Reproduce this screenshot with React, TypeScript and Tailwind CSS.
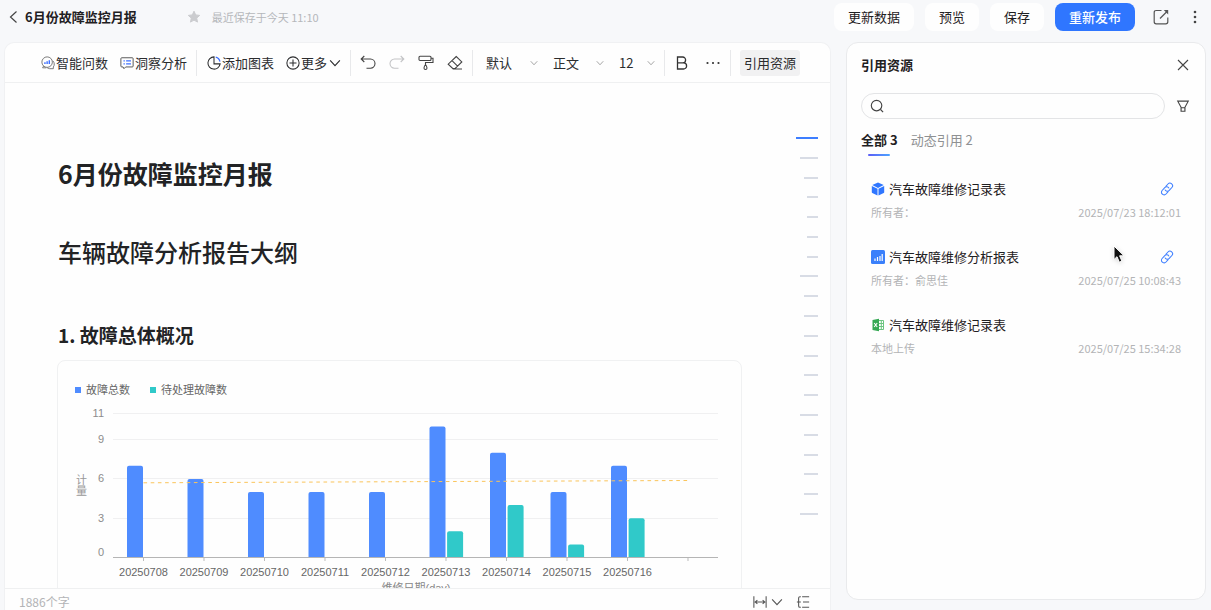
import { useState } from 'react'
import type { ReactNode } from 'react'
import clsx from 'clsx'

type Resource = {
  id: string
  name: string
  meta: string
  time: string
  kind: 'dataset' | 'report' | 'excel'
  linked: boolean
}

const resources: Resource[] = [
  { id: 'r1', name: '汽车故障维修记录表', meta: '所有者：', time: '2025/07/23 18:12:01', kind: 'dataset', linked: true },
  { id: 'r2', name: '汽车故障维修分析报表', meta: '所有者：俞思佳', time: '2025/07/25 10:08:43', kind: 'report', linked: true },
  { id: 'r3', name: '汽车故障维修记录表', meta: '本地上传', time: '2025/07/25 15:34:28', kind: 'excel', linked: false },
]

const faults = [
  { day: '20250708', total: 7, pending: 0 },
  { day: '20250709', total: 6, pending: 0 },
  { day: '20250710', total: 5, pending: 0 },
  { day: '20250711', total: 5, pending: 0 },
  { day: '20250712', total: 5, pending: 0 },
  { day: '20250713', total: 10, pending: 2 },
  { day: '20250714', total: 8, pending: 4 },
  { day: '20250715', total: 5, pending: 1 },
  { day: '20250716', total: 7, pending: 3 },
]

// heading depth of every outline mark, 0 is the current one
const outline = [0, 1, 2, 3, 3, 3, 3, 1, 2, 2, 2, 2, 2, 2, 1, 2, 2, 2, 2, 1]
const outlineStyles = ['w-[22px] bg-[#3d7eff]', 'w-[18px] bg-[#d8dce5]', 'w-[14px] bg-[#d8dce5]', 'w-[11px] bg-[#d8dce5]']

function Icon({ size = 16, className, children }: { size?: number; className?: string; children: ReactNode }) {
  return (
    <svg
      width={size}
      height={size}
      viewBox="0 0 16 16"
      fill="none"
      stroke="currentColor"
      strokeWidth={1.1}
      className={clsx('shrink-0', className)}
      aria-hidden="true"
    >
      {children}
    </svg>
  )
}

function Chevron({ size = 12, className }: { size?: number; className?: string }) {
  return (
    <Icon size={size} className={className}>
      <path d="M1.5 4.5 8 11.5l6.5-7" strokeWidth={1.5} />
    </Icon>
  )
}

function Divider() {
  return <div className="mx-[9px] h-[26px] w-px shrink-0 bg-[#e8e9eb]" />
}

function ToolButton({ label, children }: { label: string; children: ReactNode }) {
  return (
    <button type="button" aria-label={label} className="flex w-4 shrink-0 items-center justify-center">
      {children}
    </button>
  )
}

function ToolSelect({ label, options, className }: { label: string; options: string[]; className: string }) {
  return (
    <div className={clsx('relative shrink-0', className)}>
      <select aria-label={label} className="w-full appearance-none bg-transparent leading-5 outline-none">
        {options.map((o) => (
          <option key={o}>{o}</option>
        ))}
      </select>
      <Chevron size={8} className="pointer-events-none absolute top-1.5 right-0 text-[#888]" />
    </div>
  )
}

function Header() {
  return (
    <header className="mb-2 flex h-[34px] shrink-0 items-center px-2">
      <button type="button" aria-label="返回" className="flex w-[17px] items-center">
        <svg width="11" height="14" viewBox="0 0 11 14" fill="none" stroke="#444" strokeWidth="1.2">
          <path d="M8.5 1.5 2.500 7l6 5.500" />
        </svg>
      </button>
      <h1 className="text-[13px] leading-5 font-bold text-[#1f2022]">6月份故障监控月报</h1>
      <button type="button" aria-label="收藏" className="ml-[50px]">
        <svg width="14" height="14" viewBox="0 0 14 14" fill="#cbcccf" stroke="#cbcccf" strokeLinejoin="round">
          <path d="m7 1.200 1.700 3.700 4 .5-3 2.700.8 4L7 10.100l-3.500 2 .8-4-3-2.700 4-.5z" />
        </svg>
      </button>
      <span className="ml-[11px] text-[11px] leading-5 text-[#b5b7ba]">最近保存于今天 11:10</span>

      <div className="ml-auto flex items-center gap-[11px] text-[13px]">
        <button type="button" className="h-7 rounded-lg bg-[#fefefe] px-3.5">更新数据</button>
        <button type="button" className="h-7 rounded-lg bg-[#fefefe] px-3.5">预览</button>
        <button type="button" className="h-7 rounded-lg bg-[#fefefe] px-3.5">保存</button>
        <button type="button" className="h-7 rounded-lg bg-[#2f76ff] px-3.5 font-medium text-white">重新发布</button>
      </div>
      <button type="button" aria-label="分享" className="ml-[18px] text-[#555]">
        <Icon>
          <path d="M8.500 1.500H3.200q-2 0-2 2v9.300q0 2 2 2h9.600q2 0 2-2V8.500" strokeWidth={1.200} />
          <path d="M7 9.500 14 2.500" strokeWidth={1.200} />
          <path d="M10.800 1h4.400v4.400z" fill="currentColor" stroke="none" />
        </Icon>
      </button>
      <button type="button" aria-label="更多操作" className="ml-[18px] text-[#444]">
        <Icon>
          <g fill="currentColor" stroke="none">
            <circle cx="8" cy="3" r="1.3" />
            <circle cx="8" cy="8" r="1.3" />
            <circle cx="8" cy="13" r="1.3" />
          </g>
        </Icon>
      </button>
    </header>
  )
}

function Toolbar() {
  return (
    <div className="flex h-10 shrink-0 items-center border-b border-[#eff0f1] pl-9 text-[13px] leading-5 whitespace-nowrap text-[#2b2c2e]">
      <div className="flex items-center gap-3">
        <button type="button" className="flex items-center gap-px">
          <Icon size={14}>
            <circle cx="7" cy="7" r="6" stroke="#777" />
            <path d="M3 11.500 1.800 13.500H6" stroke="#777" />
            <path d="M13.500 5.500c2 2 2.200 5 .6 7v2H10c-1.200 0-2.300-.4-3-1.200" stroke="#777" />
            <path d="M4.500 9V7.200M7 9V6M9.500 9V4.800" stroke="#3d6fff" strokeWidth={1.6} />
          </Icon>
          智能问数
        </button>
        <button type="button" className="flex items-center gap-px">
          <Icon size={14}>
            <path d="M2 2h12q1 0 1 1v8.500q0 1-1 1H6.500L4.500 14.500l-1-2H2q-1 0-1-1V3q0-1 1-1z" stroke="#555" strokeLinejoin="round" />
            <path d="M4 5.500h1.500M7 5.500h5.500M4 9h1.500M7 9h5.500" stroke="#3d6fff" strokeWidth={1.400} />
          </Icon>
          洞察分析
        </button>
      </div>
      <Divider />
      <div className="flex items-center gap-3 pl-px">
        <button type="button" className="flex items-center gap-px">
          <Icon size={14}>
            <path d="M8 1a7 7 0 1 0 7 8H8z" strokeWidth={1.200} />
            <path d="M10 1.200a6.500 6.500 0 0 1 4.800 5.300" stroke="#3d6fff" strokeWidth={1.400} />
          </Icon>
          添加图表
        </button>
        <button type="button" className="flex items-center gap-px">
          <Icon size={14}>
            <circle cx="8" cy="8" r="7" strokeWidth={1.200} />
            <path d="M8 4v8M4 8h8" strokeWidth={1.200} />
          </Icon>
          更多
          <Chevron className="ml-px" />
        </button>
      </div>
      <Divider />
      <div className="flex items-center gap-[13px] text-[#444]">
        <ToolButton label="撤销">
          <Icon>
            <path d="M4.300 1 1.200 4l3.100 3M1.400 4h9a4.600 4.600 0 0 1 0 9.200H6.500" />
          </Icon>
        </ToolButton>
        <ToolButton label="重做">
          <Icon className="text-[#c3c4c6]">
            <path d="m11.700 1 3.100 3-3.100 3M14.600 4h-9a4.600 4.600 0 0 0 0 9.200h3.900" />
          </Icon>
        </ToolButton>
        <ToolButton label="格式刷">
          <Icon>
            <rect x="1" y="1.200" width="12" height="4.300" rx="1" />
            <path d="M13 3.200h2v4.300H7.500v2" />
            <path d="M7.500 9.500c1 1.300 1.500 2.200 1.500 3.500a1.500 1.500 0 0 1-3 0c0-1.300.5-2.200 1.500-3.500z" />
          </Icon>
        </ToolButton>
        <ToolButton label="清除格式">
          <Icon>
            <path d="M9.300 1.500 1.200 9.200l4.500 4.300h2.500l6.600-6.600zM5 5.600l5.600 5.600M5.700 14H15" />
          </Icon>
        </ToolButton>
      </div>
      <Divider />
      <div className="flex items-center gap-[15px] pl-1">
        <ToolSelect label="字体" options={['默认', '宋体', '黑体']} className="w-[52px]" />
        <ToolSelect label="段落样式" options={['正文', '标题 1', '标题 2']} className="w-[51px]" />
        <ToolSelect label="字号" options={['12', '14', '16']} className="w-9" />
      </div>
      <Divider />
      <div className="flex items-center gap-[15px] text-[#333]">
        <ToolButton label="加粗">
          <Icon>
            <path d="M3.500 2h5.200a2.900 2.900 0 0 1 0 5.800H3.500zM3.500 7.800h6a3.100 3.100 0 0 1 0 6.200h-6z" strokeWidth={1.300} />
          </Icon>
        </ToolButton>
        <ToolButton label="更多格式">
          <Icon>
            <g fill="currentColor" stroke="none">
              <circle cx="2.500" cy="8" r="1.100" />
              <circle cx="8" cy="8" r="1.100" />
              <circle cx="13.500" cy="8" r="1.100" />
            </g>
          </Icon>
        </ToolButton>
      </div>
      <Divider />
      <button type="button" className="h-[26px] rounded-[3px] bg-[#f1f1f2] px-1">引用资源</button>
    </div>
  )
}

const STEP = 60.5
const UNIT = 13.1
const BASE = 196.5

function topRounded(x: number, value: number) {
  const y = BASE - value * UNIT
  return `M${x} ${BASE}V${y + 2}q0-2 2-2h12q2 0 2 2V${BASE}z`
}

function FaultChart() {
  const ticks = [
    { value: 11, line: 52.5, label: 56 },
    { value: 9, line: 78.5, label: 82 },
    { value: 6, line: 117.5, label: 121 },
    { value: 3, line: 157.5, label: 161 },
    { value: 0, line: 0, label: 195 },
  ]
  return (
    <svg
      viewBox="0 0 683 250"
      className="w-full font-['Liberation_Sans','Noto_Sans_CJK_SC',sans-serif] text-[11px]"
      role="img"
      aria-label="故障总数与待处理故障数"
    >
      <rect x="17" y="26" width="6" height="6" fill="#4f8cff" />
      <text x="28" y="33" fill="#666">故障总数</text>
      <rect x="92" y="26" width="6" height="6" fill="#30c9c9" />
      <text x="103" y="33" fill="#666">待处理故障数</text>

      {ticks.map((t) => (
        <g key={t.value}>
          {t.line > 0 && <path d={`M55 ${t.line}H660`} stroke="#f0f0f1" />}
          <text x="46" y={t.label} textAnchor="end" fill="#8c8c8c">{t.value}</text>
        </g>
      ))}
      <text x="18" y="123" fill="#999">计</text>
      <text x="18" y="134" fill="#999">量</text>

      {faults.map((f, i) => (
        <g key={f.day}>
          <path d={topRounded(69 + i * STEP, f.total)} fill="#4f8cff" />
          {f.pending > 0 && <path d={topRounded(86.6 + i * STEP, f.pending)} fill="#30c9c9" />}
          <text x={85.5 + i * STEP} y="215" textAnchor="middle" fill="#666">{f.day}</text>
        </g>
      ))}
      <path d="M55 196.5H660" stroke="#b5b5b5" />
      {Array.from({ length: 10 }, (_, i) => (
        <path key={i} d={`M${85.5 + i * STEP} 197v3`} stroke="#bbb" />
      ))}
      <path d="M85.5 121.8 630 119.5" stroke="#fbc55b" strokeDasharray="3.6 3.6" fill="none" />
      <text x="358" y="231" textAnchor="middle" fill="#888">维修日期(day)</text>
    </svg>
  )
}

function Editor() {
  return (
    <main className="flex min-w-0 flex-1 flex-col overflow-hidden rounded-t-[10px] border border-b-0 border-[#f0f1f3] bg-[#fefefe]">
      <Toolbar />
      <div className="flex min-h-0 flex-1 overflow-hidden">
        <article className="min-w-0 flex-1 pt-[72px] pl-[52px] text-[#222325]">
          <h2 className="pl-px text-[25px] leading-9 font-bold">6月份故障监控月报</h2>
          <h2 className="mt-[43px] pl-px text-[24px] leading-9 font-medium">车辆故障分析报告大纲</h2>
          <h3 className="mt-[51px] pl-px text-[19px] leading-7 font-bold">1. 故障总体概况</h3>
          <div className="mt-[11px] rounded-lg border border-[#f0f1f2]">
            <FaultChart />
          </div>
        </article>
        <nav aria-label="大纲" className="mt-[54px] mr-3 ml-[53px] flex h-[378px] w-[23px] flex-col items-end justify-between">
          {outline.map((level, i) => (
            <a key={i} href={`#section-${i + 1}`} aria-label={`第 ${i + 1} 节`} className={clsx('block h-0.5', outlineStyles[level])} />
          ))}
        </nav>
      </div>
      <footer className="flex h-[22px] shrink-0 items-center border-t border-[#eff0f1] pt-1 pr-5 pl-3.5 text-[12px] leading-4 text-[#b3b4b6]">
        <span>1886个字</span>
        <div className="ml-auto flex items-center text-[#555]">
          <button type="button" aria-label="页面宽度" className="flex items-center gap-1">
            <Icon size={14}>
              <path d="M1 1.500v13M15 1.500v13M2.500 8h11M5 5.800 2.500 8 5 10.200M11 5.800 13.500 8 11 10.200" strokeWidth={1.200} />
            </Icon>
            <Chevron />
          </button>
          <button type="button" aria-label="目录" className="ml-[13px]">
            <Icon size={14}>
              <path d="M7 2h8M1 8h4.500M8 8h7M7 14h8M5.500 2h-1q-1.500 0-1.500 1.500v9Q3 14 4.500 14h1" strokeWidth={1.200} />
            </Icon>
          </button>
        </div>
      </footer>
    </main>
  )
}

function ResourceIcon({ kind }: { kind: Resource['kind'] }) {
  if (kind === 'dataset') {
    return (
      <svg width="14" height="14" viewBox="0 0 14 14" aria-hidden="true">
        <path d="M7 .5 12.7 3 7 5.900 1.300 3z" fill="#2f76ff" />
        <path d="M.8 4 6.500 6.800v6.700L1.300 11a1 1 0 0 1-.5-.8z" fill="#2f76ff" />
        <path d="M13.200 4 7.500 6.800v6.700l5.200-2.500a1 1 0 0 0 .5-.8z" fill="#2f76ff" />
      </svg>
    )
  }
  if (kind === 'report') {
    return (
      <svg width="14" height="14" viewBox="0 0 14 14" aria-hidden="true">
        <rect width="14" height="14" rx="1.5" fill="#3a80fb" />
        <path d="M4 11V8.500M6.500 11V7M9 11V6M11.200 11V4" stroke="#fff" strokeWidth="1.2" />
      </svg>
    )
  }
  return (
    <svg width="14" height="14" viewBox="0 0 14 14" aria-hidden="true">
      <path d="M8 2.500h4.500v9H8M8 5.500h4.500M8 8.500h4.500M10.300 2.500v9" fill="none" stroke="#6cc580" />
      <path d="M1.500 2 8 .8v12.400L1.500 12z" fill="#35a853" />
      <path d="m3.200 5 3 4M6.200 5l-3 4" stroke="#fff" strokeWidth="1.1" />
    </svg>
  )
}

function ResourcePanel() {
  const [tab, setTab] = useState<'all' | 'dynamic'>('all')
  const tabs = [
    { id: 'all' as const, label: '全部 3' },
    { id: 'dynamic' as const, label: '动态引用 2' },
  ]
  const shown = tab === 'all' ? resources : resources.filter((r) => r.linked)

  return (
    <aside className="mb-[10px] w-[360px] shrink-0 rounded-xl border border-[#e9eaec] bg-[#fefefe] px-3.5 pt-3">
      <div className="flex items-center justify-between">
        <h2 className="text-[13px] leading-5 font-bold">引用资源</h2>
        <button type="button" aria-label="关闭" className="text-[#444]">
          <Icon>
            <path d="m3 3 10 10M13 3 3 13" />
          </Icon>
        </button>
      </div>

      <div className="mt-[18px] flex items-center gap-[10px]">
        <label className="flex h-[26px] min-w-0 flex-1 items-center rounded-full border border-[#e3e4e6] px-2">
          <Icon size={14} className="text-[#444]">
            <circle cx="7.5" cy="7.5" r="6" strokeWidth={1.3} />
            <path d="m12 12 3 3" strokeWidth={1.3} />
          </Icon>
          <input type="text" aria-label="搜索资源" className="ml-2 min-w-0 flex-1 bg-transparent text-[13px] outline-none" />
        </label>
        <button type="button" aria-label="筛选" className="flex w-4 justify-center text-[#444]">
          <Icon size={14}>
            <path d="M2 2.500h12L10.200 9.500v4.500H5.800V9.500zM5.800 10h4.400" strokeWidth={1.3} />
          </Icon>
        </button>
      </div>

      <div role="tablist" className="mt-[11px] flex gap-[13px] text-[13px] leading-5">
        {tabs.map((t) => (
          <button
            key={t.id}
            type="button"
            role="tab"
            aria-selected={tab === t.id}
            onClick={() => setTab(t.id)}
            className={clsx('flex flex-col items-center gap-1', tab === t.id ? 'font-bold text-[#1f2022]' : 'text-[#8f9193]')}
          >
            {t.label}
            <span className={clsx('h-0.5 w-[22px] rounded-full', tab === t.id && 'bg-linear-to-r from-[#5b5cf6] to-[#4aa3ff]')} />
          </button>
        ))}
      </div>

      <ul className="mt-[23px] flex flex-col gap-[27px] px-[10px]">
        {shown.map((r) => (
          <li key={r.id} className="relative">
            <div className="flex items-center gap-1">
              <ResourceIcon kind={r.kind} />
              <span className="text-[13px] leading-5">{r.name}</span>
              {r.linked && (
                <button type="button" aria-label="动态引用" className="mr-[7px] ml-auto text-[#3d7eff]">
                  <Icon size={14}>
                    <g transform="rotate(-48 8 8)" strokeWidth={1.2}>
                      <path d="M7 11H3a3 3 0 0 1 0-6h4.500a3 3 0 0 1 2.600 4.300" />
                      <path d="M9 5h4a3 3 0 0 1 0 6H8.500a3 3 0 0 1-2.600-4.300" />
                    </g>
                  </Icon>
                </button>
              )}
            </div>
            <div className="mt-[5px] flex justify-between text-[11px] leading-4 text-[#b3b4b6]">
              <span>{r.meta}</span>
              <time>{r.time}</time>
            </div>
            {r.kind === 'report' && (
              <svg width="12" height="19" viewBox="0 0 12 19" className="pointer-events-none absolute -top-0.5 right-14 drop-shadow-sm" aria-hidden="true">
                <path d="M1 1v13.500l3-2.800 2.300 5.500 2.600-1.100-2.300-5.300H11z" fill="#111" stroke="#fff" />
              </svg>
            )}
          </li>
        ))}
      </ul>
    </aside>
  )
}

export default function App() {
  return (
    <div className="flex h-screen flex-col overflow-hidden bg-[#f7f8fa] font-['Noto_Sans_CJK_SC','Liberation_Sans',sans-serif] text-[#1f2022]">
      <Header />
      <div className="flex min-h-0 flex-1 gap-[15px] pr-[5px] pl-1">
        <Editor />
        <ResourcePanel />
      </div>
    </div>
  )
}
